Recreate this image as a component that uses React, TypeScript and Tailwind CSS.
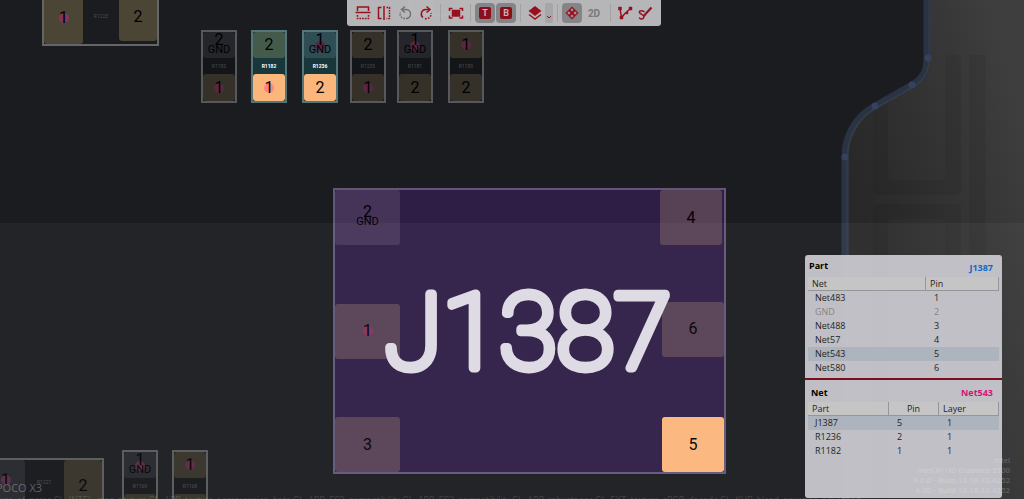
import React from "react";

type Tone = "brown" | "olive" | "slate" | "green" | "teal" | "hot" | "mauve" | "lilac";

const tones: Record<Tone, string> = {
  brown: "bg-[#353028]",
  olive: "bg-[#4a4535]",
  slate: "bg-[#25262b]",
  green: "bg-[#445a4b]",
  teal: "bg-[#2f4d54]",
  hot: "bg-[#fbb67c]",
  mauve: "bg-[#574155]",
  lilac: "bg-[#453458]",
};

type PadProps = {
  n: string;
  tone: Tone;
  className?: string;
  net?: string;
  dot?: "dim" | "mid" | "hot";
};

function Pad({ n, tone, className = "", net, dot }: PadProps) {
  const dotTone =
    dot === "hot" ? "bg-[#ff8585]" : dot === "mid" ? "bg-[#84345b]" : "bg-[#592840]";
  return (
    <div
      className={`grid place-items-center rounded-[3px] font-['Liberation_Sans_Narrow',Roboto,sans-serif] text-base leading-none text-black ${tones[tone]} ${className}`}
    >
      {dot && <span className={`col-start-1 row-start-1 size-[10px] rounded-full ${dotTone}`} />}
      <span className={`relative col-start-1 row-start-1 flex flex-col items-center ${net ? "pb-1" : ""}`}>
        <span>{n}</span>
        {net && <span className="-mt-1 text-[11px] leading-none">{net}</span>}
      </span>
    </div>
  );
}

type ResistorProps = {
  name: string;
  place: string;
  top: PadProps;
  bottom: PadProps;
  active?: boolean;
};

function Resistor({ name, place, top, bottom, active }: ResistorProps) {
  return (
    <div
      className={`absolute flex h-[73px] w-9 flex-col border-2 ${place} ${
        active ? "border-[#557578] bg-[#17373b]" : "border-[#57585c] bg-[#141518]"
      }`}
    >
      <Pad {...top} className="h-[26px]" />
      <div
        className={`flex flex-1 items-center justify-center text-[5px] leading-none ${
          active ? "font-bold text-white" : "text-[#4a4b4e]"
        }`}
      >
        {name}
      </div>
      <Pad {...bottom} className="h-[27px]" />
    </div>
  );
}

function Board() {
  return (
    <div className="absolute inset-0 overflow-hidden">
      <svg className="absolute inset-0 size-full" aria-hidden="true">
        <defs>
          <linearGradient id="table" gradientUnits="userSpaceOnUse" x1="845" y1="160" x2="1024" y2="110">
            <stop offset="0" stopColor="#282828" />
            <stop offset="1" stopColor="#3e3e3e" />
          </linearGradient>
        </defs>
        <path
          d="M927 0V58C927 71 923 79 912 85L875 106C856 116 845 136 845 157V2000H4000V0Z"
          fill="url(#table)"
        />
        <g fill="#000" fillOpacity=".06">
          <path d="M873 106L888 98V174q0 6 6 6H945V60q0-5 5-5h6q5 0 5 5V190q0 5-5 5H878q-5 0-5-5Z" />
          <path d="M878 204h78q5 0 5 5V499H945V224q0-5-5-5H893q-5 0-5 5V499H873V209q0-5 5-5Z" />
          <path d="M969 55h17V499H969Z" />
        </g>
        <path
          d="M927 0V58C927 71 923 79 912 85L875 106C856 116 845 136 845 157V2000"
          fill="none"
          stroke="#2a3344"
          strokeWidth="7"
        />
        <path
          d="M929.500 0V58C929 72 924 81 913 87L876 108C858 118 847.500 137 847.500 157V2000"
          fill="none"
          stroke="#353b46"
          strokeWidth="2"
        />
        <g fill="#34425f">
          <circle cx="928" cy="58" r="3.500" />
          <circle cx="912" cy="85" r="3.500" />
          <circle cx="875" cy="106" r="3.500" />
          <circle cx="845" cy="157" r="3.500" />
        </g>
      </svg>

      <div className="absolute top-0 left-[42px] flex h-[46px] w-[117px] items-start border-x-2 border-b-2 border-[#646569]">
        <Pad n="1" tone="olive" dot="mid" className="h-11 w-[39px] rounded-t-none pb-2" />
        <span className="flex-1 pt-[14px] text-center text-[5px] leading-none text-[#4a4b4e]">R1223</span>
        <Pad n="2" tone="olive" className="h-[41px] w-[38px] rounded-t-none pb-2" />
      </div>
      <div className="absolute top-0 left-[408px] flex h-4 w-[75px] justify-between border-x-2 border-b-2 border-[#5b5c60]">
        <div className="w-6 bg-[#4a4535]" />
        <div className="w-6 bg-[#4a4535]" />
      </div>

      <Resistor name="R1183" place="top-[30px] left-[201px]" top={{ n: "2", tone: "slate", net: "GND" }} bottom={{ n: "1", tone: "brown", dot: "dim" }} />
      <Resistor name="R1182" place="top-[30px] left-[251px]" active top={{ n: "2", tone: "green" }} bottom={{ n: "1", tone: "hot", dot: "hot" }} />
      <Resistor name="R1236" place="top-[30px] left-[302px]" active top={{ n: "1", tone: "teal", net: "GND", dot: "dim" }} bottom={{ n: "2", tone: "hot" }} />
      <Resistor name="R1235" place="top-[30px] left-[350px]" top={{ n: "2", tone: "brown" }} bottom={{ n: "1", tone: "brown", dot: "dim" }} />
      <Resistor name="R1181" place="top-[30px] left-[397px]" top={{ n: "1", tone: "slate", net: "GND", dot: "dim" }} bottom={{ n: "2", tone: "brown" }} />
      <Resistor name="R1180" place="top-[30px] left-[448px]" top={{ n: "1", tone: "brown", dot: "dim" }} bottom={{ n: "2", tone: "brown" }} />
      <Resistor name="R1169" place="top-[450px] left-[122px]" top={{ n: "1", tone: "slate", net: "GND", dot: "dim" }} bottom={{ n: "", tone: "brown" }} />
      <Resistor name="R1168" place="top-[450px] left-[172px]" top={{ n: "1", tone: "brown", dot: "dim" }} bottom={{ n: "", tone: "brown" }} />

      <div className="absolute top-[458px] -left-4 flex h-[60px] w-[120px] border-2 border-[#57585c] bg-[#141518]">
        <Pad n="1" tone="slate" dot="dim" className="w-[39px] pb-4" />
        <span className="flex-1 pt-[20px] pl-3 text-[5px] leading-none text-[#4a4b4e]">R1221</span>
        <Pad n="2" tone="brown" className="w-[38px] pb-1" />
      </div>

      <div className="absolute top-[188px] left-[333px] grid h-[286px] w-[393px] grid-cols-[65px_1fr_64px] border-2 border-[#62567a] bg-[#2e1d45]">
        <div className="flex flex-col justify-between">
          <Pad n="2" tone="lilac" net="GND" className="h-[55px]" />
          <Pad n="1" tone="mauve" dot="mid" className="h-[55px]" />
          <Pad n="3" tone="mauve" className="h-[55px]" />
        </div>
        <div />
        <div className="flex flex-col justify-between">
          <Pad n="4" tone="mauve" className="mr-[2px] h-[55px]" />
          <Pad n="6" tone="mauve" className="mb-1 ml-[2px] h-[55px]" />
          <Pad n="5" tone="hot" className="ml-[2px] h-[55px]" />
        </div>
        <svg viewBox="0 0 393 286" className="absolute inset-0 size-full" role="img" aria-label="J1387">
          <text
            x="195"
            y="181"
            textAnchor="middle"
            fontFamily="Roboto, sans-serif"
            fontWeight="100"
            fontSize="106"
            fill="#dedae3"
            stroke="#dedae3"
            strokeWidth="9"
            strokeLinejoin="round"
          >
            J1387
          </text>
        </svg>
      </div>

      <div className="absolute inset-x-0 top-[223px] bottom-0 bg-white/4" />
    </div>
  );
}

function Icon({ children, className = "text-[#98101f]" }: { children: React.ReactNode; className?: string }) {
  return (
    <svg
      viewBox="0 0 16 16"
      className={`size-4 shrink-0 ${className}`}
      fill="none"
      stroke="currentColor"
      strokeWidth="1.500"
      aria-hidden="true"
    >
      {children}
    </svg>
  );
}

function Tool({ label, children, className = "w-[21px]" }: { label: string; children: React.ReactNode; className?: string }) {
  return (
    <button type="button" aria-label={label} className={`flex h-5 items-center justify-center rounded ${className}`}>
      {children}
    </button>
  );
}

const Divider = () => <span className="mx-1 h-[18px] w-px bg-[#a2a2a4]" />;

function Toolbar() {
  return (
    <div role="toolbar" aria-label="View" className="flex h-[26px] items-center rounded-b-[3px] bg-[#bcbcbe]/97 pr-[6px] pl-[5px]">
      <Tool label="Flip vertically">
        <Icon>
          <path d="M2.500 6V2h11v4M.5 7.500h15" />
          <path d="M2.500 10v3.500h11V10" strokeDasharray="1.700 1" />
        </Icon>
      </Tool>
      <Tool label="Flip horizontally">
        <Icon>
          <path d="M8 1v14M5.500 2.500H2.500v11h3" />
          <path d="M10.500 2.500h3v11h-3" strokeDasharray="1.700 1" />
        </Icon>
      </Tool>
      <Tool label="Rotate left">
        <Icon className="text-[#6e6e70]">
          <path d="M5.500 4.500H9A4.500 4.500 0 0 1 9 13.500" />
          <path d="M8 13.500A4.600 4.600 0 0 1 3.500 7" strokeDasharray="1.700 1.200" />
          <path d="M8 1.500L4.500 4.500L8 7.500" />
        </Icon>
      </Tool>
      <Tool label="Rotate right">
        <Icon>
          <path d="M11 4.500H7.500A4.500 4.500 0 0 0 5 12.500" />
          <path d="M7 13.500A4.800 4.800 0 0 0 13 8" strokeDasharray="1.700 1.200" />
          <path d="M8.500 1.500L12 4.500L8.500 7.500" />
        </Icon>
      </Tool>
      <Divider />
      <Tool label="Fit to window">
        <Icon>
          <path d="M1.500 6V3.500H4.500M11.500 3.500h3V6M14.500 10.500V13h-3M4.500 13h-3v-2.500" />
          <path d="M4.500 5.500h7v5.500h-7Z" fill="currentColor" />
        </Icon>
      </Tool>
      <Divider />
      <div className="flex gap-px">
        <Tool label="Top layer" className="w-5 bg-[#858587]">
          <span className="grid h-3 w-3 place-items-center rounded-[2px] bg-[#8c0d1c] text-[9px] leading-none font-bold text-[#c9b4b7]">T</span>
        </Tool>
        <Tool label="Bottom layer" className="w-5 bg-[#858587]">
          <span className="grid h-3 w-3 place-items-center rounded-[2px] bg-[#8c0d1c] text-[9px] leading-none font-bold text-[#c9b4b7]">B</span>
        </Tool>
      </div>
      <Divider />
      <Tool label="Layers" className="w-5">
        <Icon>
          <path d="M8 1L14.500 6L8 11L1.500 6Z" fill="currentColor" stroke="none" />
          <path d="M2 9.500L8 14L14 9.500" />
        </Icon>
      </Tool>
      <Tool label="Layer options" className="w-2 rounded-[2px] bg-[#a6a6a8]">
        <svg viewBox="0 0 6 6" className="mt-2 size-[6px] text-[#98101f]" fill="none" stroke="currentColor" aria-hidden="true">
          <path d="M1 2L3 4L5 2" />
        </svg>
      </Tool>
      <Divider />
      <Tool label="Show pads" className="w-5 bg-[#858587]">
        <Icon>
          <path d="M8 1.500L14.500 8L8 14.500L1.500 8Z" fill="currentColor" stroke="none" />
          <path
            d="M8 3.200L9.700 4.900L8 6.600L6.300 4.900ZM8 9.400L9.700 11.100L8 12.800L6.300 11.100ZM4.900 6.300L6.600 8L4.900 9.700L3.200 8ZM11.100 6.300L12.800 8L11.100 9.700L9.400 8Z"
            fill="#a09496"
            stroke="none"
          />
        </Icon>
      </Tool>
      <Tool label="2D view" className="w-6 text-[10px] font-bold text-[#78787a]">2D</Tool>
      <Divider />
      <Tool label="Show nets" className="w-5">
        <Icon>
          <path d="M3 3.500L4.500 12.500L8 8.500L13.500 3.500" />
          <path d="M1.500 2h3v3h-3ZM12 2h3v3h-3ZM3 11h3v3H3ZM9 7h2v2H9Z" fill="currentColor" strokeWidth=".5" />
        </Icon>
      </Tool>
      <Tool label="Draw" className="w-5">
        <Icon>
          <path d="M7 6.500C3 4.500 1 7 3.500 8.500S8 11 6.500 13S3 13.500 2.500 13" strokeLinecap="round" />
          <path d="M8 9.500L14.500 2.500" strokeWidth="2.200" />
          <path d="M6.500 11.500L7 9L9 10.500Z" fill="currentColor" strokeWidth=".5" />
        </Icon>
      </Tool>
    </div>
  );
}

const parts = [
  ["Net483", "1"],
  ["GND", "2"],
  ["Net488", "3"],
  ["Net57", "4"],
  ["Net543", "5"],
  ["Net580", "6"],
];

const pins = [
  ["J1387", "5", "1"],
  ["R1236", "2", "1"],
  ["R1182", "1", "1"],
];

const th = "h-[14px] border-r border-b border-[#96969a] bg-[#c5c5c6] p-0 leading-[13px] font-normal";

function Inspector() {
  return (
    <aside className="flex h-[243px] w-[197px] flex-col rounded-[3px] bg-[#cac9cf]/94 font-['Open_Sans','Noto_Sans',sans-serif] text-[9px] leading-[14px] text-[#1f1f22]">
      <section aria-labelledby="part-title" className="h-[123px] px-[3px] pt-1">
        <div className="flex h-[18px] justify-between pr-[6px] pl-px">
          <h2 id="part-title" className="font-bold text-black">Part</h2>
          <span className="pt-[2px] font-bold text-[#1268c9]">J1387</span>
        </div>
        <table className="w-full table-fixed border-separate border-spacing-0 text-left">
          <thead>
            <tr>
              <th className={`${th} w-[118px] pl-1`}>Net</th>
              <th className={`${th} pl-1`}>Pin</th>
            </tr>
          </thead>
          <tbody>
            {parts.map(([net, pin]) => (
              <tr key={net} className={net === "Net543" ? "bg-[#adb4be]" : net === "GND" ? "text-[#858588]" : ""}>
                <td className="h-[14px] p-0 pl-[7px]">{net}</td>
                <td className="p-0 pl-2">{pin}</td>
              </tr>
            ))}
          </tbody>
        </table>
      </section>
      <section aria-labelledby="net-title" className="flex-1 border-t-2 border-[#7e0e1e] px-[3px] pt-[6px]">
        <div className="flex h-4 justify-between pr-[6px] pl-[3px]">
          <h2 id="net-title" className="font-bold text-black">Net</h2>
          <span className="font-bold text-[#d9127a]">Net543</span>
        </div>
        <table className="w-full table-fixed border-separate border-spacing-0 text-left">
          <thead>
            <tr>
              <th className={`${th} w-[81px] pl-1`}>Part</th>
              <th className={`${th} w-[50px] text-center`}>Pin</th>
              <th className={`${th} pl-1`}>Layer</th>
            </tr>
          </thead>
          <tbody>
            {pins.map(([part, pin, layer]) => (
              <tr key={part} className={part === "J1387" ? "bg-[#adb4be]" : ""}>
                <td className="h-[14px] p-0 pl-[7px]">{part}</td>
                <td className="p-0 pl-2">{pin}</td>
                <td className="p-0 pl-2">{layer}</td>
              </tr>
            ))}
          </tbody>
        </table>
      </section>
    </aside>
  );
}

function DriverInfo() {
  return (
    <div className="pointer-events-none absolute inset-0 overflow-hidden">
      <div className="absolute right-[14px] bottom-[3px] text-right text-[8px] leading-[10px] font-medium text-white/20">
        <p>Intel</p>
        <p>Intel(R) HD Graphics 2500</p>
        <p>4.0.0 - Build 10.18.10.4252</p>
        <p>4.00 - Build 10.18.10.4252</p>
      </div>
      <p className="absolute bottom-[3px] -left-1 font-['Open_Sans',sans-serif] text-[11px] leading-4 text-white/30">POCO X3</p>
      <p className="absolute -bottom-[6px] left-0 text-[9px] leading-[10px] whitespace-nowrap text-white/15">
        ure_of_parse GL_INTEL_map_texture GL_ARB_texture_compression_bptc GL_ARB_ES2_compatibility GL_ARB_ES3_compatibility
        GL_ARB_robustness GL_EXT_texture_sRGB_decode GL_KHR_blend_equation_advanced
      </p>
    </div>
  );
}

export default function App() {
  return (
    <main className="relative flex min-h-screen flex-col overflow-hidden bg-[#1b1c20] font-[Roboto,sans-serif]">
      <Board />
      <header className="relative flex justify-center pr-4">
        <Toolbar />
      </header>
      <div className="relative flex flex-1 items-end justify-end pr-[22px] pb-px">
        <Inspector />
      </div>
      <DriverInfo />
    </main>
  );
}
